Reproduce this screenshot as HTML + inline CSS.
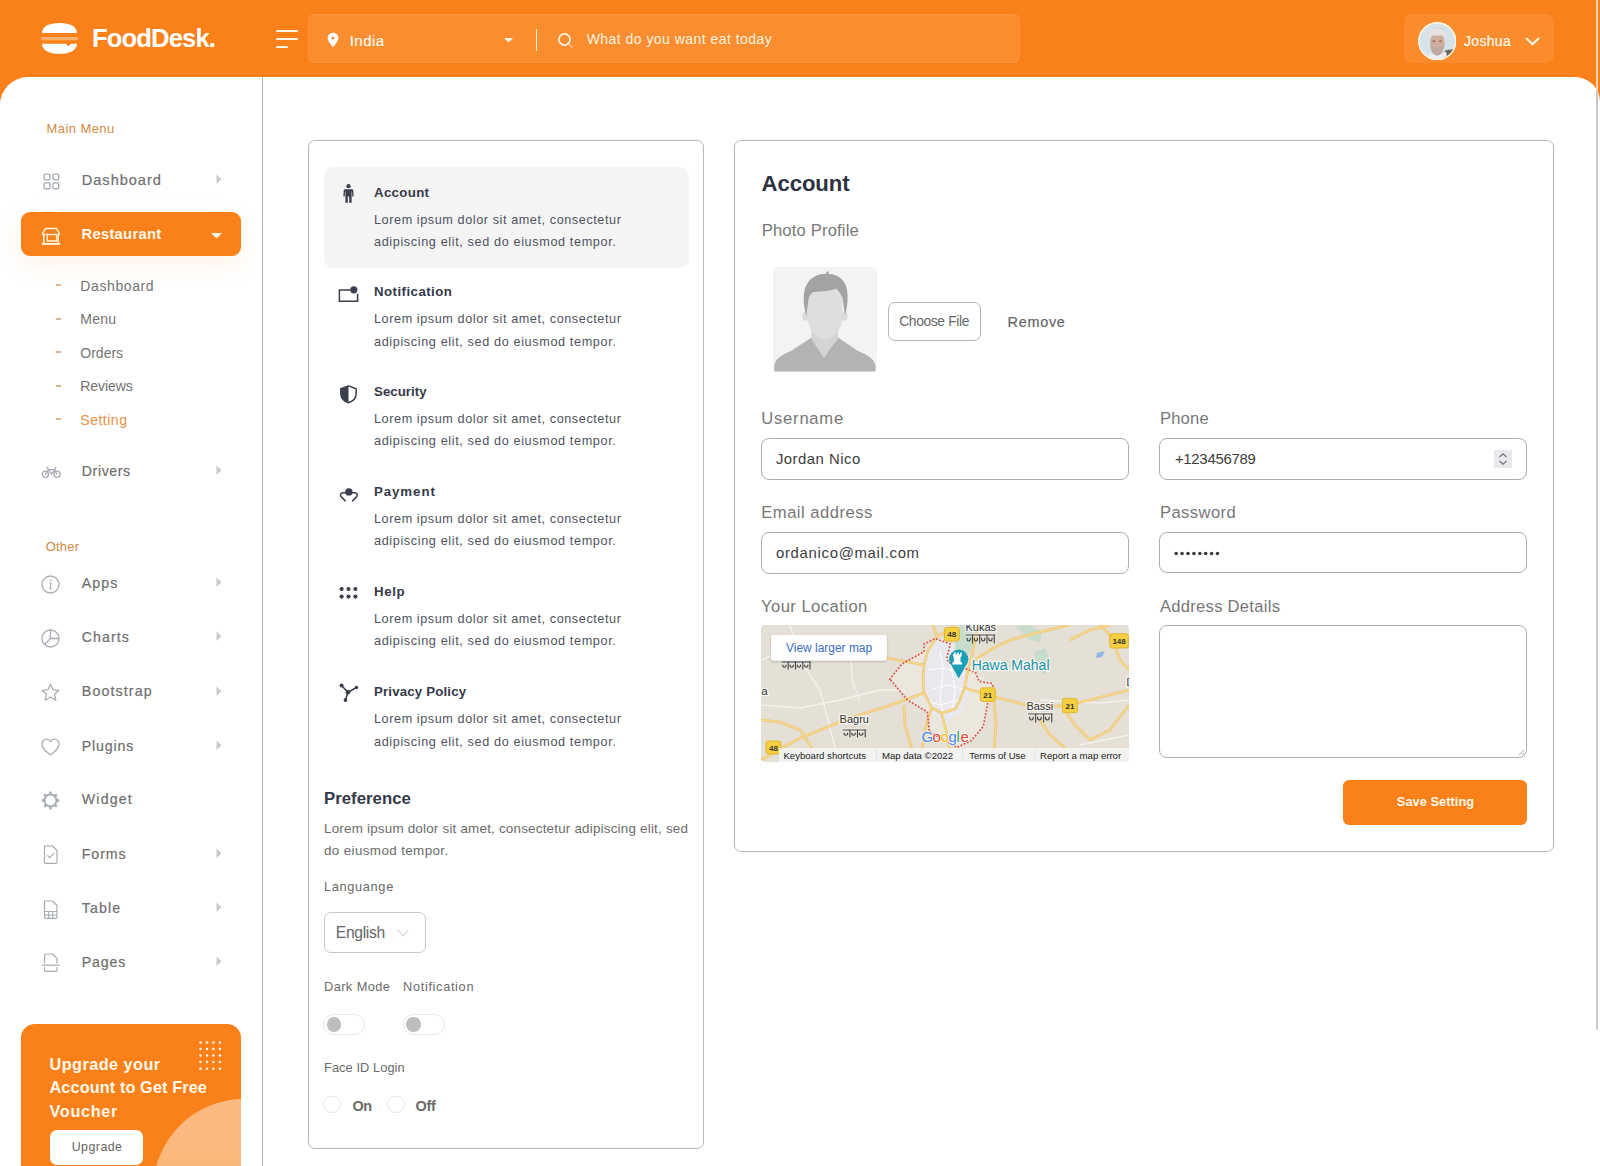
<!DOCTYPE html>
<html><head><meta charset="utf-8"><title>FoodDesk</title><style>
*{margin:0;padding:0;box-sizing:border-box}
html,body{width:1600px;height:1166px;overflow:hidden;background:#fff}
body{position:relative;font-family:"Liberation Sans",sans-serif}
.t{position:absolute;white-space:nowrap;line-height:1}
svg{display:block}
</style></head><body>
<div style="position:absolute;left:0.00px;top:0.00px;width:1600.00px;height:101.00px;background:#FA8119"></div>
<div style="position:absolute;left:0.00px;top:76.50px;width:1600.00px;height:1089.50px;background:#fff;border-radius:28px 25px 0 0"></div>
<svg style="position:absolute;left:40.00px;top:20.00px;" width="40.00" height="38.00" viewBox="0 0 40.00 38.00">
<path d="M2 13 C2.3 6.5 8.5 3 19.5 3 C30.5 3 36.7 6.5 37 13 Z" fill="#fff"/>
<rect x="1" y="17" width="37" height="3.2" rx="1.5" fill="#fff" fill-opacity="0.38"/>
<path d="M2 23.7 L26 23.7 L28.4 26.6 L30.8 23.7 L37 23.7 C36.7 30 30.5 33.8 19.5 33.8 C8.5 33.8 2.3 30 2 23.7 Z" fill="#fff"/>
</svg>
<div id="t0" class="t" style="left:92.00px;top:26.32px;font-size:25.62px;font-weight:700;color:#fff;letter-spacing:-0.875px;">FoodDesk.</div>
<div style="position:absolute;left:275.50px;top:29.80px;width:22.30px;height:2.20px;background:#fff8e6;border-radius:1px"></div>
<div style="position:absolute;left:275.50px;top:37.80px;width:22.30px;height:2.20px;background:#fff8e6;border-radius:1px"></div>
<div style="position:absolute;left:275.50px;top:45.80px;width:12.30px;height:2.20px;background:#fff8e6;border-radius:1px"></div>
<div style="position:absolute;left:308.00px;top:14.00px;width:711.50px;height:49.00px;background:rgba(255,255,255,0.1);border:1px solid rgba(255,255,255,0.06);border-radius:6px"></div>
<svg style="position:absolute;left:327.00px;top:31.50px;" width="12.00" height="16.00" viewBox="0 0 12.00 16.00"><path d="M6 0.8 C2.9 0.8 0.6 3.1 0.6 6.1 C0.6 9.6 6 15.2 6 15.2 C6 15.2 11.4 9.6 11.4 6.1 C11.4 3.1 9.1 0.8 6 0.8 Z" fill="#fff"/><circle cx="6" cy="6.1" r="1.5" fill="#e98a3c"/></svg>
<div id="t1" class="t" style="left:349.70px;top:32.79px;font-size:15.07px;font-weight:400;color:#fff8ea;letter-spacing:0.450px;-webkit-text-stroke:0.2px #fff8ea;">India</div>
<svg style="position:absolute;left:503.50px;top:37.50px;" width="9.00" height="5.00" viewBox="0 0 9.00 5.00"><path d="M0 0 L9 0 L4.5 4.5 Z" fill="#fff8e6"/></svg>
<div style="position:absolute;left:536.00px;top:28.80px;width:1.20px;height:22.20px;background:#fff3d6"></div>
<svg style="position:absolute;left:556.50px;top:31.50px;" width="17.00" height="17.00" viewBox="0 0 17.00 17.00"><circle cx="7.5" cy="7.5" r="5.6" fill="none" stroke="#fff6e0" stroke-width="1.7"/><path d="M11.6 11.6 L15 15" stroke="#fde3c0" stroke-opacity="0.6" stroke-width="1.5" stroke-linecap="round"/></svg>
<div id="t2" class="t" style="left:586.70px;top:32.49px;font-size:14.02px;font-weight:400;color:#fff3df;letter-spacing:0.452px;">What do you want eat today</div>
<div style="position:absolute;left:1403.50px;top:14.00px;width:150.50px;height:48.50px;background:rgba(255,255,255,0.09);border-radius:8px"></div>
<svg style="position:absolute;left:1417.50px;top:21.50px;" width="38.50" height="38.50" viewBox="0 0 38.50 38.50"><defs><clipPath id="av"><circle cx="19.25" cy="19.25" r="17.7"/></clipPath></defs>
<circle cx="19.25" cy="19.25" r="19.25" fill="#fff6e2"/>
<g clip-path="url(#av)"><rect x="0" y="0" width="40" height="40" fill="#d4e2ec"/>
<path d="M27 28.5 L39 26.5 L39 40 L24 40 Z" fill="#6a6858"/>
<path d="M8 40 L12 31 L19.5 34 L28 29.5 L30 40 Z" fill="#eeeeee"/>
<ellipse cx="19" cy="12.5" rx="9.2" ry="7.5" fill="#dddadc"/>
<ellipse cx="19.3" cy="21" rx="7.4" ry="10" fill="#cfae9e"/>
<path d="M12.5 22.5 C12.5 29.5 15.5 33.5 19.3 33.5 C23 33.5 26 29.5 26 22.5 C23 26 15.5 26 12.5 22.5 Z" fill="#bfaaa2"/>
<path d="M10.5 19 L10.5 11 C12 5.5 26 5.5 28 11 L28 19 L26.5 13.5 L12.5 13.5 Z" fill="#e6e3e5"/>
<rect x="14.8" y="18.6" width="2.4" height="1.1" fill="#6a4a3a"/><rect x="21.2" y="18.6" width="2.4" height="1.1" fill="#6a4a3a"/>
</g></svg>
<div id="t3" class="t" style="left:1464.00px;top:34.49px;font-size:14.02px;font-weight:400;color:#fff8ea;letter-spacing:0.300px;-webkit-text-stroke:0.2px #fff8ea;">Joshua</div>
<svg style="position:absolute;left:1525.00px;top:37.00px;" width="15.00" height="9.00" viewBox="0 0 15.00 9.00"><path d="M1.5 1.5 L7.5 7.3 L13.5 1.5" fill="none" stroke="#fff8e6" stroke-width="2.1" stroke-linecap="round" stroke-linejoin="round"/></svg>
<div style="position:absolute;left:1595.50px;top:0.00px;width:2.70px;height:91.00px;background:#efd2b8"></div>
<div style="position:absolute;left:1595.50px;top:91.00px;width:2.70px;height:939.00px;background:#c8c8c8;border-radius:0 0 2px 2px"></div>
<div style="position:absolute;left:262.00px;top:77.00px;width:1.00px;height:1089.00px;background:#b5b5b5"></div>
<div id="t4" class="t" style="left:46.50px;top:122.78px;font-size:12.96px;font-weight:400;color:#d08a45;letter-spacing:0.450px;">Main Menu</div>
<svg style="position:absolute;left:42.50px;top:172.50px;" width="17.00" height="17.00" viewBox="0 0 17.00 17.00"><rect x="1.1" y="1.1" width="5.8" height="5.8" rx="1.3" fill="none" stroke="#a8adb3" stroke-width="1.4"/><rect x="9.9" y="1.1" width="5.8" height="5.8" rx="1.3" fill="none" stroke="#a8adb3" stroke-width="1.4"/><rect x="1.1" y="9.9" width="5.8" height="5.8" rx="1.3" fill="none" stroke="#a8adb3" stroke-width="1.4"/><rect x="9.9" y="9.9" width="5.8" height="5.8" rx="1.3" fill="none" stroke="#a8adb3" stroke-width="1.4"/></svg>
<div id="t5" class="t" style="left:81.80px;top:172.97px;font-size:14.62px;font-weight:400;color:#6f6f6f;letter-spacing:0.950px;-webkit-text-stroke:0.2px #6f6f6f;">Dashboard</div>
<svg style="position:absolute;left:215.70px;top:173.80px;" width="6.00" height="11.00" viewBox="0 0 6.00 11.00"><path d="M0.5 0.5 L5.5 5.25 L0.5 10 Z" fill="#c9c9c9"/></svg>
<div style="position:absolute;left:21.00px;top:212.00px;width:219.50px;height:43.50px;background:#FA8119;border-radius:9px;box-shadow:0 8px 24px rgba(250,129,25,0.10)"></div>
<svg style="position:absolute;left:41.00px;top:226.50px;" width="20.00" height="19.00" viewBox="0 0 20.00 19.00"><path d="M4.6 1.5 L15.3 1.5 L18.2 5.8 Q18.8 7.4 17.2 7.4 L2.8 7.4 Q1.2 7.4 1.8 5.8 Z" fill="none" stroke="#fff3dc" stroke-width="1.5" stroke-linejoin="round"/>
<circle cx="4.4" cy="6.4" r="0.85" fill="#e98a3a"/><circle cx="8.2" cy="6.4" r="0.85" fill="#e98a3a"/><circle cx="11.9" cy="6.4" r="0.85" fill="#e98a3a"/><circle cx="15.6" cy="6.4" r="0.85" fill="#e98a3a"/>
<path d="M2.8 8 L2.8 16.7 L17.2 16.7 L17.2 8" fill="none" stroke="#fff3dc" stroke-width="1.5"/>
<path d="M6.3 8.2 L6.3 14 L15.6 14 L15.6 8.2" fill="none" stroke="#fff3dc" stroke-width="1.4"/>
<path d="M1.4 16.9 L18.6 16.9" stroke="#fff3dc" stroke-width="1.6" stroke-linecap="round"/></svg>
<div id="t6" class="t" style="left:81.50px;top:227.24px;font-size:14.77px;font-weight:700;color:#fff8ec;letter-spacing:0.278px;">Restaurant</div>
<svg style="position:absolute;left:210.50px;top:232.80px;" width="11.00" height="6.00" viewBox="0 0 11.00 6.00"><path d="M0 0 L11 0 L5.5 5.5 Z" fill="#fff8ec"/></svg>
<div style="position:absolute;left:55.80px;top:284.10px;width:5.50px;height:2.00px;background:#dcb78e"></div>
<div id="t7" class="t" style="left:80.30px;top:278.69px;font-size:14.02px;font-weight:400;color:#747474;letter-spacing:0.600px;">Dashboard</div>
<div style="position:absolute;left:55.80px;top:317.60px;width:5.50px;height:2.00px;background:#dcb78e"></div>
<div id="t8" class="t" style="left:80.30px;top:312.19px;font-size:14.02px;font-weight:400;color:#747474;letter-spacing:0.267px;">Menu</div>
<div style="position:absolute;left:55.80px;top:351.10px;width:5.50px;height:2.00px;background:#dcb78e"></div>
<div id="t9" class="t" style="left:80.30px;top:345.69px;font-size:14.02px;font-weight:400;color:#747474;letter-spacing:0.000px;">Orders</div>
<div style="position:absolute;left:55.80px;top:384.80px;width:5.50px;height:2.00px;background:#dcb78e"></div>
<div id="t10" class="t" style="left:80.30px;top:379.39px;font-size:14.02px;font-weight:400;color:#747474;letter-spacing:-0.100px;">Reviews</div>
<div style="position:absolute;left:55.80px;top:418.40px;width:5.50px;height:2.00px;background:#dcb78e"></div>
<div id="t11" class="t" style="left:80.30px;top:412.99px;font-size:14.02px;font-weight:400;color:#e8923f;letter-spacing:0.500px;">Setting</div>
<svg style="position:absolute;left:41.00px;top:465.00px;" width="20.00" height="14.00" viewBox="0 0 20.00 14.00"><circle cx="4.4" cy="9.2" r="3.1" fill="none" stroke="#a8adb3" stroke-width="1.3"/><circle cx="16" cy="9.2" r="3.1" fill="none" stroke="#a8adb3" stroke-width="1.3"/><path d="M4.4 9.2 L7.4 4.6 L10.6 9.2 L13.6 4.6 L16 9.2 M7.4 4.6 L13.6 4.6 M6.2 2.4 L7.4 4.6 M14.8 2.3 L13.6 4.6" fill="none" stroke="#a8adb3" stroke-width="1.3" stroke-linejoin="round" stroke-linecap="round"/></svg>
<div id="t12" class="t" style="left:81.80px;top:464.36px;font-size:14.17px;font-weight:400;color:#6f6f6f;letter-spacing:0.583px;-webkit-text-stroke:0.2px #6f6f6f;">Drivers</div>
<svg style="position:absolute;left:215.70px;top:465.00px;" width="6.00" height="11.00" viewBox="0 0 6.00 11.00"><path d="M0.5 0.5 L5.5 5.25 L0.5 10 Z" fill="#c9c9c9"/></svg>
<div id="t13" class="t" style="left:45.70px;top:540.78px;font-size:12.96px;font-weight:400;color:#d08a45;letter-spacing:0.225px;">Other</div>
<svg style="position:absolute;left:41.00px;top:574.50px;" width="20.00" height="20.00" viewBox="0 0 20.00 20.00"><circle cx="9.5" cy="9.5" r="8.5" fill="none" stroke="#a8adb3" stroke-width="1.3"/><path d="M9.9 5.3 L9.9 5.6" stroke="#a8adb3" stroke-width="1.6" stroke-linecap="round"/><path d="M8.6 8 L10 8 L9 13.6 L10.4 13.6" fill="none" stroke="#a8adb3" stroke-width="1.2" stroke-linecap="round"/></svg>
<div id="t14" class="t" style="left:81.80px;top:575.76px;font-size:14.17px;font-weight:400;color:#6f6f6f;letter-spacing:1.067px;-webkit-text-stroke:0.2px #6f6f6f;">Apps</div>
<svg style="position:absolute;left:215.70px;top:577.20px;" width="6.00" height="11.00" viewBox="0 0 6.00 11.00"><path d="M0.5 0.5 L5.5 5.25 L0.5 10 Z" fill="#c9c9c9"/></svg>
<svg style="position:absolute;left:41.00px;top:628.70px;" width="20.00" height="20.00" viewBox="0 0 20.00 20.00"><circle cx="9.5" cy="9.5" r="8.5" fill="none" stroke="#a8adb3" stroke-width="1.3"/><path d="M9.5 1 L9.5 9.5 L18 9.5 M9.5 9.5 L3.5 15.5" fill="none" stroke="#a8adb3" stroke-width="1.3"/></svg>
<div id="t15" class="t" style="left:81.80px;top:629.96px;font-size:14.17px;font-weight:400;color:#6f6f6f;letter-spacing:1.080px;-webkit-text-stroke:0.2px #6f6f6f;">Charts</div>
<svg style="position:absolute;left:215.70px;top:631.40px;" width="6.00" height="11.00" viewBox="0 0 6.00 11.00"><path d="M0.5 0.5 L5.5 5.25 L0.5 10 Z" fill="#c9c9c9"/></svg>
<svg style="position:absolute;left:41.00px;top:682.60px;" width="20.00" height="20.00" viewBox="0 0 20.00 20.00"><path d="M9.5 1.2 L12 6.8 L18 7.3 L13.4 11.2 L14.8 17.2 L9.5 14 L4.2 17.2 L5.6 11.2 L1 7.3 L7 6.8 Z" fill="none" stroke="#a8adb3" stroke-width="1.3" stroke-linejoin="round"/></svg>
<div id="t16" class="t" style="left:81.80px;top:684.36px;font-size:14.17px;font-weight:400;color:#6f6f6f;letter-spacing:1.150px;-webkit-text-stroke:0.2px #6f6f6f;">Bootstrap</div>
<svg style="position:absolute;left:215.70px;top:685.80px;" width="6.00" height="11.00" viewBox="0 0 6.00 11.00"><path d="M0.5 0.5 L5.5 5.25 L0.5 10 Z" fill="#c9c9c9"/></svg>
<svg style="position:absolute;left:41.00px;top:738.20px;" width="20.00" height="19.00" viewBox="0 0 20.00 19.00"><path d="M9.5 17 C5 13.5 1 10.5 1 6.2 C1 3.2 3.2 1.2 5.6 1.2 C7.4 1.2 8.7 2.3 9.5 3.6 C10.3 2.3 11.6 1.2 13.4 1.2 C15.8 1.2 18 3.2 18 6.2 C18 10.5 14 13.5 9.5 17 Z" fill="none" stroke="#a8adb3" stroke-width="1.3" stroke-linejoin="round"/></svg>
<div id="t17" class="t" style="left:81.80px;top:738.96px;font-size:14.17px;font-weight:400;color:#6f6f6f;letter-spacing:0.867px;-webkit-text-stroke:0.2px #6f6f6f;">Plugins</div>
<svg style="position:absolute;left:215.70px;top:740.40px;" width="6.00" height="11.00" viewBox="0 0 6.00 11.00"><path d="M0.5 0.5 L5.5 5.25 L0.5 10 Z" fill="#c9c9c9"/></svg>
<svg style="position:absolute;left:41.00px;top:791.10px;" width="20.00" height="20.00" viewBox="0 0 20.00 20.00"><rect x="8.3" y="0.6" width="2.4" height="3" rx="0.6" fill="#a8adb3" transform="rotate(0 9.5 9.5)"/><rect x="8.3" y="0.6" width="2.4" height="3" rx="0.6" fill="#a8adb3" transform="rotate(45 9.5 9.5)"/><rect x="8.3" y="0.6" width="2.4" height="3" rx="0.6" fill="#a8adb3" transform="rotate(90 9.5 9.5)"/><rect x="8.3" y="0.6" width="2.4" height="3" rx="0.6" fill="#a8adb3" transform="rotate(135 9.5 9.5)"/><rect x="8.3" y="0.6" width="2.4" height="3" rx="0.6" fill="#a8adb3" transform="rotate(180 9.5 9.5)"/><rect x="8.3" y="0.6" width="2.4" height="3" rx="0.6" fill="#a8adb3" transform="rotate(225 9.5 9.5)"/><rect x="8.3" y="0.6" width="2.4" height="3" rx="0.6" fill="#a8adb3" transform="rotate(270 9.5 9.5)"/><rect x="8.3" y="0.6" width="2.4" height="3" rx="0.6" fill="#a8adb3" transform="rotate(315 9.5 9.5)"/><circle cx="9.5" cy="9.5" r="6" fill="none" stroke="#a8adb3" stroke-width="2"/></svg>
<div id="t18" class="t" style="left:81.80px;top:792.36px;font-size:14.17px;font-weight:400;color:#6f6f6f;letter-spacing:1.180px;-webkit-text-stroke:0.2px #6f6f6f;">Widget</div>
<svg style="position:absolute;left:42.00px;top:845.40px;" width="18.00" height="20.00" viewBox="0 0 18.00 20.00"><path d="M2.5 1 L10.5 1 L15 5.5 L15 17 Q15 18.3 13.7 18.3 L3.8 18.3 Q2.5 18.3 2.5 17 Z" fill="none" stroke="#a8adb3" stroke-width="1.2" stroke-linejoin="round"/><path d="M5.7 10.6 L7.8 12.6 L11.6 8.6" fill="none" stroke="#a8adb3" stroke-width="1.2" stroke-linecap="round"/></svg>
<div id="t19" class="t" style="left:81.80px;top:846.66px;font-size:14.17px;font-weight:400;color:#6f6f6f;letter-spacing:0.925px;-webkit-text-stroke:0.2px #6f6f6f;">Forms</div>
<svg style="position:absolute;left:215.70px;top:848.10px;" width="6.00" height="11.00" viewBox="0 0 6.00 11.00"><path d="M0.5 0.5 L5.5 5.25 L0.5 10 Z" fill="#c9c9c9"/></svg>
<svg style="position:absolute;left:42.00px;top:899.50px;" width="18.00" height="20.00" viewBox="0 0 18.00 20.00"><path d="M2.5 1 L10.5 1 L15 5.5 L15 17 Q15 18.3 13.7 18.3 L3.8 18.3 Q2.5 18.3 2.5 17 Z" fill="none" stroke="#a8adb3" stroke-width="1.2" stroke-linejoin="round"/><path d="M2.5 11.5 L15 11.5 M2.5 15 L15 15 M6.7 11.5 L6.7 18.3 M10.8 11.5 L10.8 18.3" fill="none" stroke="#a8adb3" stroke-width="1.1"/></svg>
<div id="t20" class="t" style="left:81.80px;top:900.76px;font-size:14.17px;font-weight:400;color:#6f6f6f;letter-spacing:1.100px;-webkit-text-stroke:0.2px #6f6f6f;">Table</div>
<svg style="position:absolute;left:215.70px;top:902.20px;" width="6.00" height="11.00" viewBox="0 0 6.00 11.00"><path d="M0.5 0.5 L5.5 5.25 L0.5 10 Z" fill="#c9c9c9"/></svg>
<svg style="position:absolute;left:41.00px;top:953.30px;" width="20.00" height="20.00" viewBox="0 0 20.00 20.00"><path d="M3.5 10.5 L3.5 2.2 Q3.5 1 4.7 1 L11.5 1 L16 5.5 L16 10.5" fill="none" stroke="#a8adb3" stroke-width="1.2" stroke-linejoin="round"/><path d="M3.5 14 L3.5 17 Q3.5 18.3 4.8 18.3 L14.7 18.3 Q16 18.3 16 17 L16 14" fill="none" stroke="#a8adb3" stroke-width="1.2"/><path d="M0.8 12.2 L18.8 12.2" stroke="#a8adb3" stroke-width="1.2"/></svg>
<div id="t21" class="t" style="left:81.80px;top:954.56px;font-size:14.17px;font-weight:400;color:#6f6f6f;letter-spacing:0.850px;-webkit-text-stroke:0.2px #6f6f6f;">Pages</div>
<svg style="position:absolute;left:215.70px;top:956.00px;" width="6.00" height="11.00" viewBox="0 0 6.00 11.00"><path d="M0.5 0.5 L5.5 5.25 L0.5 10 Z" fill="#c9c9c9"/></svg>
<div style="position:absolute;left:21px;top:1024px;width:220px;height:160px;border-radius:14px;background:#FA8119;overflow:hidden"><div style="position:absolute;left:132px;top:75px;width:182px;height:182px;border-radius:50%;background:linear-gradient(180deg,rgba(255,255,255,0.45),rgba(255,255,255,0.38))"></div></div>
<svg style="position:absolute;left:199.00px;top:1041.00px;" width="25.00" height="31.00" viewBox="0 0 25.00 31.00"><circle cx="1.5" cy="1.5" r="1.25" fill="#fff6e8"/><circle cx="1.5" cy="8.1" r="1.25" fill="#fff6e8"/><circle cx="1.5" cy="14.6" r="1.25" fill="#fff6e8"/><circle cx="1.5" cy="21.1" r="1.25" fill="#fff6e8"/><circle cx="1.5" cy="27.7" r="1.25" fill="#fff6e8"/><circle cx="8.0" cy="1.5" r="1.25" fill="#fff6e8"/><circle cx="8.0" cy="8.1" r="1.25" fill="#fff6e8"/><circle cx="8.0" cy="14.6" r="1.25" fill="#fff6e8"/><circle cx="8.0" cy="21.1" r="1.25" fill="#fff6e8"/><circle cx="8.0" cy="27.7" r="1.25" fill="#fff6e8"/><circle cx="14.4" cy="1.5" r="1.25" fill="#fff6e8"/><circle cx="14.4" cy="8.1" r="1.25" fill="#fff6e8"/><circle cx="14.4" cy="14.6" r="1.25" fill="#fff6e8"/><circle cx="14.4" cy="21.1" r="1.25" fill="#fff6e8"/><circle cx="14.4" cy="27.7" r="1.25" fill="#fff6e8"/><circle cx="20.9" cy="1.5" r="1.25" fill="#fff6e8"/><circle cx="20.9" cy="8.1" r="1.25" fill="#fff6e8"/><circle cx="20.9" cy="14.6" r="1.25" fill="#fff6e8"/><circle cx="20.9" cy="21.1" r="1.25" fill="#fff6e8"/><circle cx="20.9" cy="27.7" r="1.25" fill="#fff6e8"/></svg>
<div id="t22" class="t" style="left:49.50px;top:1055.66px;font-size:16.28px;font-weight:700;color:#fff8ec;letter-spacing:0.445px;">Upgrade your</div>
<div id="t23" class="t" style="left:49.50px;top:1079.36px;font-size:16.28px;font-weight:700;color:#fff8ec;letter-spacing:0.106px;">Account to Get Free</div>
<div id="t24" class="t" style="left:49.50px;top:1103.36px;font-size:16.28px;font-weight:700;color:#fff8ec;letter-spacing:0.667px;">Voucher</div>
<div style="position:absolute;left:49.50px;top:1130.00px;width:93.50px;height:35.00px;background:#fff;border-radius:7px"></div>
<div id="t25" class="t" style="left:71.70px;top:1141.19px;font-size:12.36px;font-weight:400;color:#666;letter-spacing:0.483px;">Upgrade</div>
<div style="position:absolute;left:308.00px;top:140.00px;width:396.00px;height:1009.00px;border:1px solid #b8b8b8;border-radius:7px;background:#fff"></div>
<div style="position:absolute;left:323.50px;top:166.80px;width:365.50px;height:101.00px;background:#f4f4f5;border-radius:9px"></div>
<div id="t26" class="t" style="left:374.00px;top:186.33px;font-size:13.26px;font-weight:700;color:#343a48;letter-spacing:0.333px;">Account</div>
<div id="t27" class="t" style="left:374.00px;top:214.24px;font-size:12.66px;font-weight:400;color:#4f5360;letter-spacing:0.574px;">Lorem ipsum dolor sit amet, consectetur</div>
<div id="t28" class="t" style="left:374.00px;top:236.44px;font-size:12.66px;font-weight:400;color:#4f5360;letter-spacing:0.624px;">adipiscing elit, sed do eiusmod tempor.</div>
<div id="t29" class="t" style="left:374.00px;top:285.43px;font-size:13.26px;font-weight:700;color:#343a48;letter-spacing:0.455px;">Notification</div>
<div id="t30" class="t" style="left:374.00px;top:313.34px;font-size:12.66px;font-weight:400;color:#4f5360;letter-spacing:0.574px;">Lorem ipsum dolor sit amet, consectetur</div>
<div id="t31" class="t" style="left:374.00px;top:335.54px;font-size:12.66px;font-weight:400;color:#4f5360;letter-spacing:0.624px;">adipiscing elit, sed do eiusmod tempor.</div>
<div id="t32" class="t" style="left:374.00px;top:385.13px;font-size:13.26px;font-weight:700;color:#343a48;letter-spacing:0.043px;">Security</div>
<div id="t33" class="t" style="left:374.00px;top:413.04px;font-size:12.66px;font-weight:400;color:#4f5360;letter-spacing:0.574px;">Lorem ipsum dolor sit amet, consectetur</div>
<div id="t34" class="t" style="left:374.00px;top:435.24px;font-size:12.66px;font-weight:400;color:#4f5360;letter-spacing:0.624px;">adipiscing elit, sed do eiusmod tempor.</div>
<div id="t35" class="t" style="left:374.00px;top:485.23px;font-size:13.26px;font-weight:700;color:#343a48;letter-spacing:0.933px;">Payment</div>
<div id="t36" class="t" style="left:374.00px;top:513.14px;font-size:12.66px;font-weight:400;color:#4f5360;letter-spacing:0.574px;">Lorem ipsum dolor sit amet, consectetur</div>
<div id="t37" class="t" style="left:374.00px;top:535.34px;font-size:12.66px;font-weight:400;color:#4f5360;letter-spacing:0.624px;">adipiscing elit, sed do eiusmod tempor.</div>
<div id="t38" class="t" style="left:374.00px;top:585.33px;font-size:13.26px;font-weight:700;color:#343a48;letter-spacing:0.633px;">Help</div>
<div id="t39" class="t" style="left:374.00px;top:613.24px;font-size:12.66px;font-weight:400;color:#4f5360;letter-spacing:0.574px;">Lorem ipsum dolor sit amet, consectetur</div>
<div id="t40" class="t" style="left:374.00px;top:635.44px;font-size:12.66px;font-weight:400;color:#4f5360;letter-spacing:0.624px;">adipiscing elit, sed do eiusmod tempor.</div>
<div id="t41" class="t" style="left:374.00px;top:685.43px;font-size:13.26px;font-weight:700;color:#343a48;letter-spacing:0.169px;">Privacy Policy</div>
<div id="t42" class="t" style="left:374.00px;top:713.34px;font-size:12.66px;font-weight:400;color:#4f5360;letter-spacing:0.574px;">Lorem ipsum dolor sit amet, consectetur</div>
<div id="t43" class="t" style="left:374.00px;top:735.54px;font-size:12.66px;font-weight:400;color:#4f5360;letter-spacing:0.624px;">adipiscing elit, sed do eiusmod tempor.</div>
<svg style="position:absolute;left:342.00px;top:184.00px;" width="13.00" height="20.00" viewBox="0 0 13.00 20.00"><circle cx="6.5" cy="2.2" r="2.1" fill="#3a3f4e"/><path d="M3.2 5.2 L9.8 5.2 Q11.2 5.2 11.3 6.6 L11.6 12.5 L10.3 12.5 L10 7.5 L9.6 7.5 L9.6 18.8 L7.2 18.8 L7.2 12.5 L5.8 12.5 L5.8 18.8 L3.4 18.8 L3.4 7.5 L3 7.5 L2.7 12.5 L1.4 12.5 L1.7 6.6 Q1.8 5.2 3.2 5.2 Z" fill="#3a3f4e"/></svg>
<svg style="position:absolute;left:338.00px;top:285.00px;" width="21.00" height="18.00" viewBox="0 0 21.00 18.00"><path d="M12.2 5 L1.4 5 L1.4 16.2 L19.6 16.2 L19.6 8.8" fill="none" stroke="#3a3f4e" stroke-width="1.5"/><circle cx="15.8" cy="4.8" r="3.6" fill="#3a3f4e"/></svg>
<svg style="position:absolute;left:339.00px;top:384.50px;" width="19.00" height="19.00" viewBox="0 0 19.00 19.00"><path d="M9.5 0.9 L17.2 3.7 L17.2 8.6 C17.2 12.8 14 16.3 9.5 17.8 C5 16.3 1.8 12.8 1.8 8.6 L1.8 3.7 Z" fill="none" stroke="#3a3f4e" stroke-width="1.5" stroke-linejoin="round"/><path d="M9.5 0.9 L1.8 3.7 L1.8 8.6 C1.8 12.8 5 16.3 9.5 17.8 Z" fill="#3a3f4e"/></svg>
<svg style="position:absolute;left:338.50px;top:486.50px;" width="20.00" height="16.00" viewBox="0 0 20.00 16.00"><circle cx="9.9" cy="4.9" r="3.7" fill="#3a3f4e"/><path d="M6.1 13.8 L2.1 9.6 Q1.2 8.5 1.6 7.4 Q2.1 5.8 4 5.8 L15.8 5.8 Q17.7 5.8 18.2 7.4 Q18.6 8.5 17.7 9.6 L13.7 13.8" fill="none" stroke="#3a3f4e" stroke-width="1.6" stroke-linecap="round" stroke-linejoin="round"/></svg>
<svg style="position:absolute;left:338.50px;top:585.50px;" width="20.00" height="15.00" viewBox="0 0 20.00 15.00"><circle cx="2.6" cy="3.0" r="2.1" fill="#3a3f4e"/><circle cx="2.6" cy="10.6" r="2.1" fill="#3a3f4e"/><circle cx="9.5" cy="3.0" r="2.1" fill="#3a3f4e"/><circle cx="9.5" cy="10.6" r="2.1" fill="#3a3f4e"/><circle cx="16.4" cy="3.0" r="2.1" fill="#3a3f4e"/><circle cx="16.4" cy="10.6" r="2.1" fill="#3a3f4e"/></svg>
<svg style="position:absolute;left:338.50px;top:683.00px;" width="20.00" height="20.00" viewBox="0 0 20.00 20.00"><path d="M2.5 2.5 L9 9.2 L17.5 4.5 M9 9.2 L6.5 17" fill="none" stroke="#3a3f4e" stroke-width="1.6" stroke-linecap="round"/><circle cx="2.6" cy="2.6" r="2" fill="#3a3f4e"/><circle cx="17.5" cy="4.5" r="1.7" fill="#3a3f4e"/><circle cx="6.5" cy="17" r="1.9" fill="#3a3f4e"/><circle cx="9" cy="9.2" r="2.3" fill="#3a3f4e"/></svg>
<div id="t44" class="t" style="left:324.00px;top:790.58px;font-size:16.73px;font-weight:700;color:#343a48;letter-spacing:0.044px;">Preference</div>
<div id="t45" class="t" style="left:324.00px;top:822.40px;font-size:13.41px;font-weight:400;color:#6b6b6b;letter-spacing:0.207px;">Lorem ipsum dolor sit amet, consectetur adipiscing elit, sed</div>
<div id="t46" class="t" style="left:324.00px;top:844.00px;font-size:13.41px;font-weight:400;color:#6b6b6b;letter-spacing:0.376px;">do eiusmod tempor.</div>
<div id="t47" class="t" style="left:324.00px;top:880.81px;font-size:12.81px;font-weight:400;color:#6b6b6b;letter-spacing:0.650px;">Languange</div>
<div style="position:absolute;left:323.50px;top:912.30px;width:102.10px;height:41.00px;border:1px solid #c8c8c8;border-radius:7px"></div>
<div id="t48" class="t" style="left:335.80px;top:925.48px;font-size:15.68px;font-weight:400;color:#666;letter-spacing:-0.350px;">English</div>
<svg style="position:absolute;left:397.00px;top:929.00px;" width="13.00" height="9.00" viewBox="0 0 13.00 9.00"><path d="M1 1 L6.2 6.8 L11.4 1" fill="none" stroke="#d8d8d8" stroke-width="1.3"/></svg>
<div id="t49" class="t" style="left:324.00px;top:980.51px;font-size:12.81px;font-weight:400;color:#6b6b6b;letter-spacing:0.413px;">Dark Mode</div>
<div id="t50" class="t" style="left:403.00px;top:980.51px;font-size:12.81px;font-weight:400;color:#6b6b6b;letter-spacing:0.655px;">Notification</div>
<div style="position:absolute;left:323.20px;top:1013.90px;width:41.50px;height:21.10px;border:1px solid #e6e6e6;border-radius:11px;background:#fff"></div>
<div style="position:absolute;left:326.50px;top:1017.30px;width:14.3px;height:14.3px;border-radius:50%;background:#bdbdbd"></div>
<div style="position:absolute;left:403.00px;top:1013.90px;width:41.50px;height:21.10px;border:1px solid #e6e6e6;border-radius:11px;background:#fff"></div>
<div style="position:absolute;left:406.30px;top:1017.30px;width:14.3px;height:14.3px;border-radius:50%;background:#bdbdbd"></div>
<div id="t51" class="t" style="left:324.00px;top:1062.01px;font-size:12.81px;font-weight:400;color:#6b6b6b;letter-spacing:0.083px;">Face ID Login</div>
<div style="position:absolute;left:323.20px;top:1095.5px;width:17.5px;height:17.5px;border-radius:50%;border:1px solid #e6e6e6;background:#fff"></div>
<div style="position:absolute;left:387.30px;top:1095.5px;width:17.5px;height:17.5px;border-radius:50%;border:1px solid #e6e6e6;background:#fff"></div>
<div id="t52" class="t" style="left:352.60px;top:1098.90px;font-size:14.47px;font-weight:700;color:#6a6a6a;letter-spacing:-0.600px;">On</div>
<div id="t53" class="t" style="left:415.50px;top:1098.90px;font-size:14.47px;font-weight:700;color:#6a6a6a;letter-spacing:-0.300px;">Off</div>
<div style="position:absolute;left:734.00px;top:140.00px;width:820.00px;height:712.00px;border:1px solid #b8b8b8;border-radius:7px;background:#fff"></div>
<div id="t54" class="t" style="left:761.50px;top:172.97px;font-size:22.16px;font-weight:700;color:#2e3240;letter-spacing:-0.083px;">Account</div>
<div id="t55" class="t" style="left:761.75px;top:223.41px;font-size:16.58px;font-weight:400;color:#777;letter-spacing:0.171px;">Photo Profile</div>
<svg style="position:absolute;left:773.30px;top:267.30px;" width="104.00" height="105.00" viewBox="0 0 104.00 105.00"><rect x="0" y="0" width="104" height="105" rx="5" fill="#f3f3f3"/>
<path d="M1.2 104.5 L1.2 99 C2 92 8 88 18 84 L38.5 70.5 L65 70.5 L85 84 C95 88 101.5 92 102.5 99 L102.5 104.5 Z" fill="#b3b3b3"/>
<path d="M38.5 60 L38.5 72 C42 78 47 84 51 91.5 C55 84 60 78 65 72 L65 60 Z" fill="#d4d4d4"/>
<ellipse cx="32.5" cy="49" rx="3" ry="5" fill="#dadada"/><ellipse cx="71.5" cy="49" rx="3" ry="5" fill="#dadada"/>
<path d="M34.5 30 C34.5 21 42 17 52 17 C62 17 69.5 21 69.5 30 L69.5 48 C69.5 62 61 72 52 72 C43 72 34.5 62 34.5 48 Z" fill="#dedede"/>
<path d="M33.5 48.5 C29.5 35 29 20 38 12 C43 7.5 48 6.5 52 7 L56 3.5 L55.5 7 C66 7 74 14 74.5 27 C75 36 73.5 43 72 48 L69.5 31 C68 27 66 24 63 21.5 C58 24 50 24.5 41 25 C37.5 26 35.8 30 35.3 34 Z" fill="#a3a3a3"/></svg>
<div style="position:absolute;left:888.30px;top:302.40px;width:92.30px;height:39.10px;border:1px solid #b5b5b5;border-radius:7px"></div>
<div id="t56" class="t" style="left:899.20px;top:314.91px;font-size:13.87px;font-weight:400;color:#666;letter-spacing:-0.380px;">Choose File</div>
<div id="t57" class="t" style="left:1007.50px;top:315.30px;font-size:14.47px;font-weight:400;color:#666;letter-spacing:0.700px;-webkit-text-stroke:0.2px #666;">Remove</div>
<div id="t58" class="t" style="left:761.30px;top:411.41px;font-size:16.58px;font-weight:400;color:#777;letter-spacing:0.771px;">Username</div>
<div style="position:absolute;left:761.30px;top:438.20px;width:367.50px;height:41.50px;border:1px solid #adadad;border-radius:8px"></div>
<div id="t59" class="t" style="left:775.90px;top:451.82px;font-size:14.92px;font-weight:400;color:#3d3d3d;letter-spacing:0.480px;">Jordan Nico</div>
<div id="t60" class="t" style="left:1159.90px;top:411.41px;font-size:16.58px;font-weight:400;color:#777;letter-spacing:0.200px;">Phone</div>
<div style="position:absolute;left:1159.20px;top:438.00px;width:367.40px;height:41.50px;border:1px solid #adadad;border-radius:8px"></div>
<div id="t61" class="t" style="left:1174.90px;top:451.82px;font-size:14.92px;font-weight:400;color:#3d3d3d;letter-spacing:-0.267px;">+123456789</div>
<svg style="position:absolute;left:1493.80px;top:450.00px;" width="18.00" height="18.00" viewBox="0 0 18.00 18.00"><rect x="0" y="0" width="18" height="18" fill="#e9e9ed"/><path d="M5.5 7 L9 3.8 L12.5 7 M5.5 11 L9 14.2 L12.5 11" fill="none" stroke="#6d6d6d" stroke-width="1.1"/></svg>
<div id="t62" class="t" style="left:761.30px;top:504.61px;font-size:16.58px;font-weight:400;color:#777;letter-spacing:0.493px;">Email address</div>
<div style="position:absolute;left:761.30px;top:532.20px;width:367.50px;height:41.60px;border:1px solid #adadad;border-radius:8px"></div>
<div id="t63" class="t" style="left:775.90px;top:545.92px;font-size:14.92px;font-weight:400;color:#3d3d3d;letter-spacing:0.700px;">ordanico@mail.com</div>
<div id="t64" class="t" style="left:1159.90px;top:504.81px;font-size:16.58px;font-weight:400;color:#777;letter-spacing:0.438px;">Password</div>
<div style="position:absolute;left:1159.20px;top:532.30px;width:367.40px;height:41.20px;border:1px solid #adadad;border-radius:8px"></div>
<svg style="position:absolute;left:1174.00px;top:550.80px;" width="46.00" height="5.00" viewBox="0 0 46.00 5.00"><circle cx="2.20" cy="2.5" r="1.8" fill="#3d3d3d"/><circle cx="8.10" cy="2.5" r="1.8" fill="#3d3d3d"/><circle cx="14.00" cy="2.5" r="1.8" fill="#3d3d3d"/><circle cx="19.90" cy="2.5" r="1.8" fill="#3d3d3d"/><circle cx="25.80" cy="2.5" r="1.8" fill="#3d3d3d"/><circle cx="31.70" cy="2.5" r="1.8" fill="#3d3d3d"/><circle cx="37.60" cy="2.5" r="1.8" fill="#3d3d3d"/><circle cx="43.50" cy="2.5" r="1.8" fill="#3d3d3d"/></svg>
<div id="t65" class="t" style="left:761.00px;top:598.61px;font-size:16.58px;font-weight:400;color:#777;letter-spacing:0.458px;">Your Location</div>
<div id="t66" class="t" style="left:1159.90px;top:598.61px;font-size:16.58px;font-weight:400;color:#777;letter-spacing:0.286px;">Address Details</div>
<div style="position:absolute;left:1159.20px;top:625.40px;width:367.40px;height:133.10px;border:1px solid #adadad;border-radius:8px"></div>
<svg style="position:absolute;left:1518.00px;top:749.00px;" width="7.00" height="7.00" viewBox="0 0 7.00 7.00"><path d="M6 1 L1 6 M6 4 L4 6" stroke="#999" stroke-width="0.9"/></svg>
<div style="position:absolute;left:1342.90px;top:780.30px;width:184.00px;height:44.60px;background:#FA8119;border-radius:6px"></div>
<div id="t67" class="t" style="left:1396.80px;top:796.31px;font-size:12.81px;font-weight:700;color:#fff8ec;letter-spacing:0.045px;">Save Setting</div>
<svg style="position:absolute;left:761.00px;top:625.00px;" width="368.00" height="137.00" viewBox="0 0 368.00 137.00"><defs><clipPath id="mc"><rect x="0" y="0" width="368" height="137" rx="4"/></clipPath></defs><g clip-path="url(#mc)"><rect x="0" y="0" width="368" height="137" fill="#e4e0d5"/><path d="M128.9 54.1 L141.0 38.8 L163.0 26.7 L174.0 13.5 L189.3 19.0 L214.6 47.5 L231.0 58.5 L234.4 68.4 L226.7 78.3 L222.3 101.4 L210.2 115.7 L196.0 122.3 L168.5 106.9 L166.3 87.0 L146.5 75.0 Z" fill="#ebe7dd"/><path d="M165.0 23.0 L179.0 13.0 L194.0 20.0 L207.0 35.0 L209.0 65.0 L201.0 87.0 L184.0 97.0 L169.0 87.0 L161.0 65.0 L161.0 40.0 Z" fill="#e8e9ee"/><path d="M167.0 45.0 L184.0 43.0 L199.0 50.0" fill="none" stroke="#fbfbfc" stroke-width="1.2"/><path d="M169.0 65.0 L187.0 60.0 L205.0 65.0" fill="none" stroke="#fbfbfc" stroke-width="1.2"/><path d="M179.0 25.0 L182.0 45.0 L179.0 75.0 L183.0 90.0" fill="none" stroke="#fbfbfc" stroke-width="1.2"/><path d="M189.0 35.0 L194.0 65.0 L191.0 87.0" fill="none" stroke="#fbfbfc" stroke-width="1.2"/><path d="M165.0 75.0 L179.0 80.0 L197.0 75.0" fill="none" stroke="#fbfbfc" stroke-width="1.2"/><path d="M194.0 3.0 L201.0 0.0 L214.0 1.0 L212.0 23.0 L201.0 35.0 L194.0 25.0 Z" fill="#c8dccd"/><path d="M254.0 1.0 L269.0 0.0 L281.0 7.0 L279.0 17.0 L269.0 15.0 Z" fill="#c8dccd"/><path d="M273.0 27.0 L284.0 23.0 L289.0 35.0 L284.0 50.0 L276.0 43.0 Z" fill="#c8dccd"/><path d="M336.0 28.0 L344.0 26.0 L341.0 32.0 L335.0 33.0 Z" fill="#8fb6e6"/><path d="M29.0 0.0 L39.0 35.0 L59.0 65.0 L67.0 95.0 L74.0 123.0" fill="none" stroke="#f3f1ec" stroke-width="1.4"/><path d="M0.0 35.0 L19.0 27.0 L79.0 23.0 L119.0 25.0" fill="none" stroke="#f3f1ec" stroke-width="1.4"/><path d="M0.0 80.0 L39.0 83.0 L79.0 75.0 L119.0 65.0 L144.0 65.0" fill="none" stroke="#f3f1ec" stroke-width="1.4"/><path d="M89.0 15.0 L91.0 55.0 L99.0 75.0" fill="none" stroke="#f3f1ec" stroke-width="1.4"/><path d="M279.0 75.0 L339.0 78.0 L368.0 75.0" fill="none" stroke="#f3f1ec" stroke-width="1.4"/><path d="M319.0 120.0 L368.0 110.0" fill="none" stroke="#f3f1ec" stroke-width="1.4"/><path d="M0.0 135.0 L39.0 113.0 L89.0 93.0 L127.0 81.0 L163.0 68.0" fill="none" stroke="#ebc26c" stroke-width="2.6" stroke-linejoin="round"/><path d="M0.0 135.0 L39.0 113.0 L89.0 93.0 L127.0 81.0 L163.0 68.0" fill="none" stroke="#f7d88c" stroke-width="1.5" stroke-linejoin="round"/><path d="M176.0 12.0 L167.0 25.0 L163.0 40.0 L162.0 55.0 L163.0 67.0 L170.6 82.7 L180.5 88.2 L194.8 83.8 L199.0 75.0 L203.6 63.0 L207.0 45.0 L211.0 30.0 L214.0 15.0 L217.0 0.0" fill="none" stroke="#ebc26c" stroke-width="2.6" stroke-linejoin="round"/><path d="M176.0 12.0 L167.0 25.0 L163.0 40.0 L162.0 55.0 L163.0 67.0 L170.6 82.7 L180.5 88.2 L194.8 83.8 L199.0 75.0 L203.6 63.0 L207.0 45.0 L211.0 30.0 L214.0 15.0 L217.0 0.0" fill="none" stroke="#f7d88c" stroke-width="1.5" stroke-linejoin="round"/><path d="M176.0 12.0 L184.0 7.0 L194.0 0.0" fill="none" stroke="#ebc26c" stroke-width="2.6" stroke-linejoin="round"/><path d="M176.0 12.0 L184.0 7.0 L194.0 0.0" fill="none" stroke="#f7d88c" stroke-width="1.5" stroke-linejoin="round"/><path d="M9.0 15.0 L79.0 25.0 L127.8 33.3 L163.0 40.0" fill="none" stroke="#ebc26c" stroke-width="2.6" stroke-linejoin="round"/><path d="M9.0 15.0 L79.0 25.0 L127.8 33.3 L163.0 40.0" fill="none" stroke="#f7d88c" stroke-width="1.5" stroke-linejoin="round"/><path d="M203.6 63.0 L234.0 72.0 L269.0 81.0 L301.0 81.0 L329.0 75.0 L368.0 65.0" fill="none" stroke="#ebc26c" stroke-width="2.6" stroke-linejoin="round"/><path d="M203.6 63.0 L234.0 72.0 L269.0 81.0 L301.0 81.0 L329.0 75.0 L368.0 65.0" fill="none" stroke="#f7d88c" stroke-width="1.5" stroke-linejoin="round"/><path d="M171.7 0.0 L176.0 12.0" fill="none" stroke="#ebc26c" stroke-width="2.6" stroke-linejoin="round"/><path d="M171.7 0.0 L176.0 12.0" fill="none" stroke="#f7d88c" stroke-width="1.5" stroke-linejoin="round"/><path d="M180.5 88.2 L185.0 105.0 L189.0 125.0" fill="none" stroke="#ebc26c" stroke-width="2.6" stroke-linejoin="round"/><path d="M180.5 88.2 L185.0 105.0 L189.0 125.0" fill="none" stroke="#f7d88c" stroke-width="1.5" stroke-linejoin="round"/><path d="M170.6 82.7 L164.0 105.0 L161.0 125.0" fill="none" stroke="#ebc26c" stroke-width="2.6" stroke-linejoin="round"/><path d="M170.6 82.7 L164.0 105.0 L161.0 125.0" fill="none" stroke="#f7d88c" stroke-width="1.5" stroke-linejoin="round"/><path d="M143.0 80.5 L144.0 100.0 L151.0 125.0" fill="none" stroke="#ebc26c" stroke-width="2.6" stroke-linejoin="round"/><path d="M143.0 80.5 L144.0 100.0 L151.0 125.0" fill="none" stroke="#f7d88c" stroke-width="1.5" stroke-linejoin="round"/><path d="M233.0 75.0 L235.0 100.0 L233.0 125.0" fill="none" stroke="#ebc26c" stroke-width="2.6" stroke-linejoin="round"/><path d="M233.0 75.0 L235.0 100.0 L233.0 125.0" fill="none" stroke="#f7d88c" stroke-width="1.5" stroke-linejoin="round"/><path d="M214.0 35.0 L229.0 25.0 L249.0 15.0 L279.0 7.0 L309.0 0.0" fill="none" stroke="#ebc26c" stroke-width="2.6" stroke-linejoin="round"/><path d="M214.0 35.0 L229.0 25.0 L249.0 15.0 L279.0 7.0 L309.0 0.0" fill="none" stroke="#f7d88c" stroke-width="1.5" stroke-linejoin="round"/><path d="M309.0 15.0 L329.0 5.0 L349.0 0.0" fill="none" stroke="#ebc26c" stroke-width="2.6" stroke-linejoin="round"/><path d="M309.0 15.0 L329.0 5.0 L349.0 0.0" fill="none" stroke="#f7d88c" stroke-width="1.5" stroke-linejoin="round"/><path d="M351.0 13.0 L359.0 35.0 L368.0 45.0" fill="none" stroke="#ebc26c" stroke-width="2.6" stroke-linejoin="round"/><path d="M351.0 13.0 L359.0 35.0 L368.0 45.0" fill="none" stroke="#f7d88c" stroke-width="1.5" stroke-linejoin="round"/><path d="M301.0 81.0 L314.0 100.0 L329.0 115.0 L349.0 105.0 L368.0 80.0" fill="none" stroke="#ebc26c" stroke-width="2.6" stroke-linejoin="round"/><path d="M301.0 81.0 L314.0 100.0 L329.0 115.0 L349.0 105.0 L368.0 80.0" fill="none" stroke="#f7d88c" stroke-width="1.5" stroke-linejoin="round"/><path d="M279.0 95.0 L289.0 110.0 L304.0 123.0" fill="none" stroke="#ebc26c" stroke-width="2.6" stroke-linejoin="round"/><path d="M279.0 95.0 L289.0 110.0 L304.0 123.0" fill="none" stroke="#f7d88c" stroke-width="1.5" stroke-linejoin="round"/><path d="M0.0 95.0 L19.0 97.0 L39.0 105.0 L51.0 123.0" fill="none" stroke="#ebc26c" stroke-width="2.6" stroke-linejoin="round"/><path d="M0.0 95.0 L19.0 97.0 L39.0 105.0 L51.0 123.0" fill="none" stroke="#f7d88c" stroke-width="1.5" stroke-linejoin="round"/><path d="M339.0 0.0 L354.0 15.0" fill="none" stroke="#ebc26c" stroke-width="2.6" stroke-linejoin="round"/><path d="M339.0 0.0 L354.0 15.0" fill="none" stroke="#f7d88c" stroke-width="1.5" stroke-linejoin="round"/><path d="M128.9 54.1 L141.0 38.8 L163.0 26.7 L163.0 19.0 L174.0 13.5 L189.3 19.0 L186.0 32.0 L187.0 37.0 L214.6 47.5 L218.0 56.3 L231.0 58.5 L234.4 68.4 L226.7 78.3 L222.3 101.4 L210.2 115.7 L196.0 122.3 L168.5 106.9 L166.3 87.0 L146.5 75.0 L128.9 54.1" fill="none" stroke="#e0584a" stroke-width="2" stroke-dasharray="0.1 3.4" stroke-linecap="round"/><rect x="183.4" y="2.5" width="14.9" height="13.6" rx="2" fill="#f6cf3f" stroke="#dcae22" stroke-width="0.8"/><text x="190.8" y="12.3" font-family="Liberation Sans" font-size="8" font-weight="700" fill="#333" text-anchor="middle">48</text><rect x="219.4" y="62.8" width="14.9" height="13.7" rx="2" fill="#f6cf3f" stroke="#dcae22" stroke-width="0.8"/><text x="226.8" y="72.6" font-family="Liberation Sans" font-size="8" font-weight="700" fill="#333" text-anchor="middle">21</text><rect x="301.5" y="73.4" width="14.9" height="14.3" rx="2" fill="#f6cf3f" stroke="#dcae22" stroke-width="0.8"/><text x="309.0" y="83.5" font-family="Liberation Sans" font-size="8" font-weight="700" fill="#333" text-anchor="middle">21</text><rect x="348.8" y="8.7" width="18.6" height="14.3" rx="2" fill="#f6cf3f" stroke="#dcae22" stroke-width="0.8"/><text x="358.1" y="18.9" font-family="Liberation Sans" font-size="8" font-weight="700" fill="#333" text-anchor="middle">148</text><rect x="5.0" y="116.0" width="15.0" height="13.0" rx="2" fill="#f6cf3f" stroke="#dcae22" stroke-width="0.8"/><text x="12.5" y="125.5" font-family="Liberation Sans" font-size="8" font-weight="700" fill="#333" text-anchor="middle">48</text><text x="204.5" y="5.6" font-family="Liberation Sans" font-size="11" font-weight="400" fill="#333" stroke="#fff" stroke-width="2.5" stroke-opacity="0.7" paint-order="stroke" text-anchor="start">Kukas</text><g fill="none" stroke="#444" stroke-width="1.1" stroke-linecap="round"><path d="M205.0 10.0 L234.0 10.0" stroke="#fff" stroke-width="3" stroke-opacity="0.6"/><path d="M205.0 10.0 L234.0 10.0"/><path d="M206.0 13.0 C206.0 17.0 209.4 17.0 209.4 13.0 M211.5 10.0 L211.5 18.0"/><path d="M213.2 13.0 C213.2 17.0 216.6 17.0 216.6 13.0 M218.7 10.0 L218.7 18.0"/><path d="M220.5 13.0 C220.5 17.0 223.9 17.0 223.9 13.0 M226.0 10.0 L226.0 18.0"/><path d="M227.8 13.0 C227.8 17.0 231.1 17.0 231.1 13.0 M233.2 10.0 L233.2 18.0"/></g><g fill="none" stroke="#444" stroke-width="1.1" stroke-linecap="round"><path d="M20.8 37.0 L49.8 37.0" stroke="#fff" stroke-width="3" stroke-opacity="0.6"/><path d="M20.8 37.0 L49.8 37.0"/><path d="M21.8 40.0 C21.8 43.0 25.1 43.0 25.1 40.0 M27.2 37.0 L27.2 44.0"/><path d="M29.0 40.0 C29.0 43.0 32.4 43.0 32.4 40.0 M34.5 37.0 L34.5 44.0"/><path d="M36.3 40.0 C36.3 43.0 39.6 43.0 39.6 40.0 M41.8 37.0 L41.8 44.0"/><path d="M43.5 40.0 C43.5 43.0 46.9 43.0 46.9 40.0 M49.0 37.0 L49.0 44.0"/></g><text x="0.5" y="70.2" font-family="Liberation Sans" font-size="11" font-weight="400" fill="#333" stroke="#fff" stroke-width="2.5" stroke-opacity="0.7" paint-order="stroke" text-anchor="start">a</text><text x="78.6" y="98.2" font-family="Liberation Sans" font-size="11" font-weight="400" fill="#333" stroke="#fff" stroke-width="2.5" stroke-opacity="0.7" paint-order="stroke" text-anchor="start">Bagru</text><g fill="none" stroke="#444" stroke-width="1.1" stroke-linecap="round"><path d="M82.0 105.0 L105.0 105.0" stroke="#fff" stroke-width="3" stroke-opacity="0.6"/><path d="M82.0 105.0 L105.0 105.0"/><path d="M83.0 108.0 C83.0 111.0 86.6 111.0 86.6 108.0 M88.9 105.0 L88.9 112.0"/><path d="M90.7 108.0 C90.7 111.0 94.3 111.0 94.3 108.0 M96.5 105.0 L96.5 112.0"/><path d="M98.3 108.0 C98.3 111.0 101.9 111.0 101.9 108.0 M104.2 105.0 L104.2 112.0"/></g><text x="265.4" y="84.6" font-family="Liberation Sans" font-size="11" font-weight="400" fill="#333" stroke="#fff" stroke-width="2.5" stroke-opacity="0.7" paint-order="stroke" text-anchor="start">Bassi</text><g fill="none" stroke="#444" stroke-width="1.1" stroke-linecap="round"><path d="M267.5 89.0 L291.5 89.0" stroke="#fff" stroke-width="3" stroke-opacity="0.6"/><path d="M267.5 89.0 L291.5 89.0"/><path d="M268.5 92.0 C268.5 96.0 272.3 96.0 272.3 92.0 M274.7 89.0 L274.7 97.0"/><path d="M276.5 92.0 C276.5 96.0 280.3 96.0 280.3 92.0 M282.7 89.0 L282.7 97.0"/><path d="M284.5 92.0 C284.5 96.0 288.3 96.0 288.3 92.0 M290.7 89.0 L290.7 97.0"/></g><text x="210.7" y="44.8" font-family="Liberation Sans" font-size="14" font-weight="400" fill="#1c93a8" stroke="#fff" stroke-width="2.5" stroke-opacity="0.7" paint-order="stroke" text-anchor="start">Hawa Mahal</text><text x="365.5" y="61.0" font-family="Liberation Sans" font-size="10" font-weight="400" fill="#333" stroke="#fff" stroke-width="2.5" stroke-opacity="0.7" paint-order="stroke" text-anchor="start">D</text><path d="M190.5 40.5 L204.9 40.5 L197.7 53.5 Z" fill="#1b9fb6"/><circle cx="197.7" cy="34.2" r="9.6" fill="#1b9fb6"/><path d="M193.2 27.5 l1.5 0 l0 1.8 l1.5 0 l0 -1.8 l1.5 0 l0 1.8 l1.5 0 l0 -1.8 l1.5 0 l0 3.6 l-1.2 1 l0 4.4 l1.6 1.4 l0 1.6 l-9.8 0 l0 -1.6 l1.6 -1.4 l0 -4.4 l-1.2 -1 Z" fill="#fff"/><text x="160.5" y="117.0" font-family="Liberation Sans" font-size="15" fill="#4285f4" stroke="#fff" stroke-width="1.6" stroke-opacity="0.8" paint-order="stroke">G</text><text x="171.6" y="117.0" font-family="Liberation Sans" font-size="15" fill="#ea4335" stroke="#fff" stroke-width="1.6" stroke-opacity="0.8" paint-order="stroke">o</text><text x="179.6" y="117.0" font-family="Liberation Sans" font-size="15" fill="#fbbc05" stroke="#fff" stroke-width="1.6" stroke-opacity="0.8" paint-order="stroke">o</text><text x="187.6" y="117.0" font-family="Liberation Sans" font-size="15" fill="#4285f4" stroke="#fff" stroke-width="1.6" stroke-opacity="0.8" paint-order="stroke">g</text><text x="195.6" y="117.0" font-family="Liberation Sans" font-size="15" fill="#34a853" stroke="#fff" stroke-width="1.6" stroke-opacity="0.8" paint-order="stroke">l</text><text x="199.4" y="117.0" font-family="Liberation Sans" font-size="15" fill="#ea4335" stroke="#fff" stroke-width="1.6" stroke-opacity="0.8" paint-order="stroke">e</text><rect x="18.0" y="123.0" width="350.0" height="14.0" fill="#f5f5f5" fill-opacity="0.85"/><rect x="115.3" y="124.0" width="0.8" height="12" fill="#ddd"/><rect x="201.4" y="124.0" width="0.8" height="12" fill="#ddd"/><rect x="273.5" y="124.0" width="0.8" height="12" fill="#ddd"/><text x="22.4" y="133.5" font-family="Liberation Sans" font-size="9.6" fill="#222">Keyboard shortcuts</text><text x="120.9" y="133.5" font-family="Liberation Sans" font-size="9.6" fill="#222">Map data ©2022</text><text x="208.2" y="133.5" font-family="Liberation Sans" font-size="9.6" fill="#222">Terms of Use</text><text x="279.1" y="133.5" font-family="Liberation Sans" font-size="9.6" fill="#222">Report a map error</text><rect x="10.0" y="9.9" width="115.9" height="25.9" rx="2" fill="#fff" style="filter:drop-shadow(0 1px 1px rgba(0,0,0,.2))"/><text x="25.1" y="26.8" font-family="Liberation Sans" font-size="12" fill="#3b6ec2" textLength="86" lengthAdjust="spacingAndGlyphs">View larger map</text></g></svg>
</body></html>
